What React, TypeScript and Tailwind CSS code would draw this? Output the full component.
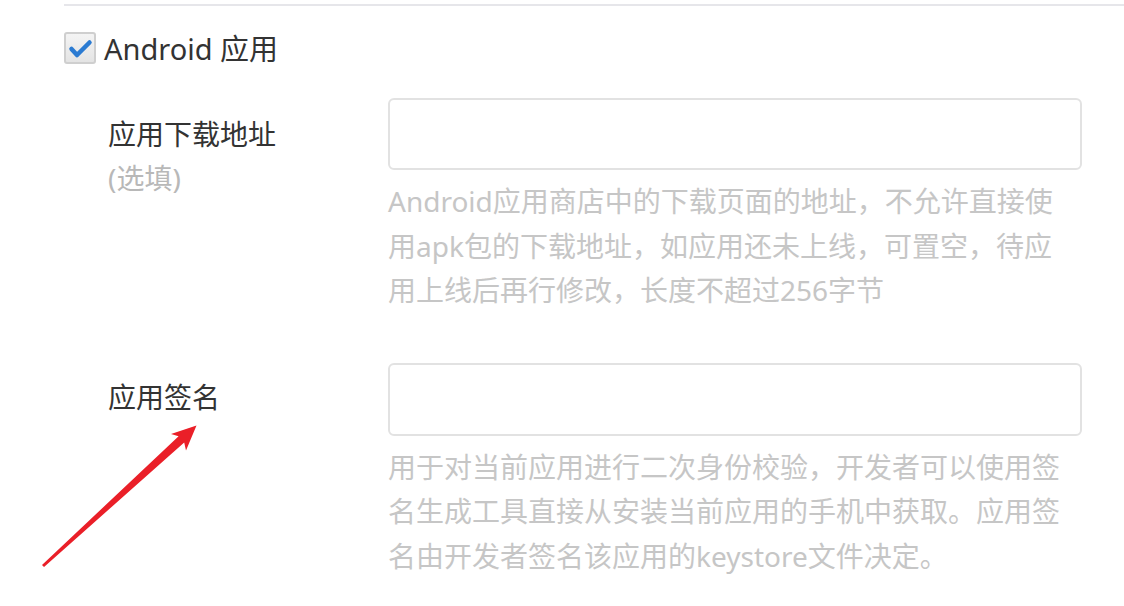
const hint1 = [
  "Android应用商店中的下载页面的地址，不允许直接使",
  "用apk包的下载地址，如应用还未上线，可置空，待应",
  "用上线后再行修改，长度不超过256字节",
]

const hint2 = [
  "用于对当前应用进行二次身份校验，开发者可以使用签",
  "名生成工具直接从安装当前应用的手机中获取。应用签",
  "名由开发者签名该应用的keystore文件决定。",
]

function Hint({ lines }: { lines: string[] }) {
  return (
    <div className="mt-[9px] text-[28px] leading-[44.5px] text-[#c6c6c6]">
      {lines.map((l) => (
        <div key={l} className="whitespace-nowrap">
          {l}
        </div>
      ))}
    </div>
  )
}

export default function App() {
  return (
    <div
      className="relative min-h-screen w-full bg-white pl-16 text-[#333]"
      style={{ fontFamily: '"Noto Sans", "Noto Sans CJK SC", sans-serif' }}
    >
      <div className="mt-1 border-t-2 border-[#e6e6ea]" />

      {/* checkbox header */}
      <div className="mt-[26px] flex h-[32px] items-center">
        <span className="flex h-[32px] w-[32px] items-center justify-center rounded-[3px] border-2 border-[#cfcfcf] bg-gradient-to-b from-[#f4f4f4] to-[#e4e4e4]">
          <svg width="28" height="28" viewBox="2 2 28 28" fill="none">
            <path d="M7.5 17 L13 23 L25.5 10.5" stroke="#2b7bd2" strokeWidth="4.5" strokeLinecap="round" strokeLinejoin="round" />
          </svg>
        </span>
        <span className="ml-[8px] text-[29px] leading-none">Android 应用</span>
      </div>

      {/* row 1 */}
      <div className="mt-[34px] flex">
        <div className="w-[324px] pl-[44px] pt-[14px] text-[28px] leading-[44px]">
          <div>应用下载地址</div>
          <div className="text-[#b8b8b8]">(选填)</div>
        </div>
        <div className="w-[694px]">
          <div className="h-[72px] rounded-[6px] border-2 border-[#e2e2e2] bg-white" />
          <Hint lines={hint1} />
        </div>
      </div>

      {/* row 2 */}
      <div className="mt-[50px] flex">
        <div className="w-[324px] pl-[44px] pt-[12px] text-[28px] leading-[44px]">
          <div>应用签名</div>
        </div>
        <div className="w-[694px]">
          <div className="h-[73px] rounded-[6px] border-2 border-[#e2e2e2] bg-white" />
          <Hint lines={hint2} />
        </div>
      </div>

      {/* annotation arrow */}
      <svg className="pointer-events-none absolute left-0 top-0" width="1124" height="606" viewBox="0 0 1124 606">
        <polygon
          points="42,561 178.6,432.2 171,430 196.5,421.5 186,446.5 184.2,438.5 44,563"
          fill="#ea1f28"
        />
      </svg>
    </div>
  )
}
